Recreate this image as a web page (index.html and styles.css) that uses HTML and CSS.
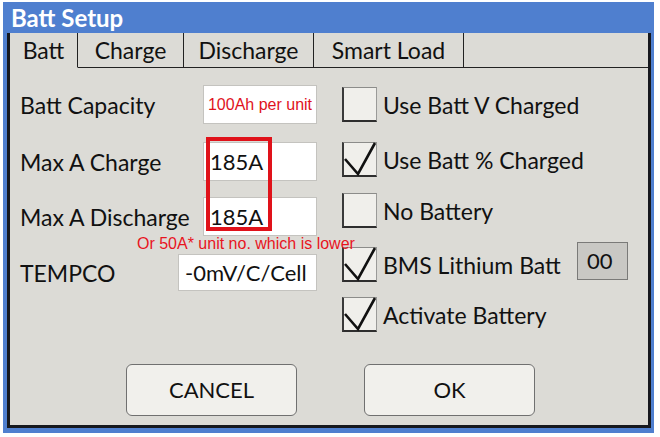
FILE: index.html
```html
<!DOCTYPE html>
<html>
<head>
<meta charset="utf-8">
<link rel="stylesheet" href="styles.css">
</head>
<body>
<div class="window">
  <div class="titlebar">Batt Setup</div>
  <div class="panel">
    <div class="tabs">
      <div class="tab tab-batt active">Batt</div>
      <div class="tab tab-charge">Charge</div>
      <div class="tab tab-discharge">Discharge</div>
      <div class="tab tab-smart">Smart Load</div>
      <div class="tab-fill"></div>
    </div>
    <div class="content">
      <div class="left">
        <div class="row row-cap">
          <span class="label">Batt Capacity</span>
          <div class="field field-note">100Ah per unit</div>
        </div>
        <div class="row row-charge">
          <span class="label">Max A Charge</span>
          <div class="field">185A</div>
        </div>
        <div class="row row-discharge">
          <span class="label">Max A Discharge</span>
          <div class="field">185A</div>
        </div>
        <div class="note">Or 50A* unit no. which is lower</div>
        <div class="row row-tempco">
          <span class="label">TEMPCO</span>
          <div class="field field-wide">-0mV/C/Cell</div>
        </div>
        <div class="highlight"></div>
      </div>
      <div class="right">
        <div class="check-row r1">
          <span class="box"></span>
          <span class="label">Use Batt V Charged</span>
        </div>
        <div class="check-row r2">
          <span class="box"><svg class="tick" viewBox="0 0 35 35"><path d="M3 17 L16 32 L33 1"/></svg></span>
          <span class="label">Use Batt % Charged</span>
        </div>
        <div class="check-row r3">
          <span class="box"></span>
          <span class="label">No Battery</span>
        </div>
        <div class="check-row r4">
          <span class="box"><svg class="tick" viewBox="0 0 35 35"><path d="M3 17 L16 32 L33 1"/></svg></span>
          <span class="label">BMS Lithium Batt</span>
          <span class="num">00</span>
        </div>
        <div class="check-row r5">
          <span class="box"><svg class="tick" viewBox="0 0 35 35"><path d="M3 17 L16 32 L33 1"/></svg></span>
          <span class="label">Activate Battery</span>
        </div>
      </div>
    </div>
    <div class="buttons">
      <div class="btn">CANCEL</div>
      <div class="btn">OK</div>
    </div>
  </div>
</div>
</body>
</html>
```
FILE: styles.css
```css
html, body {
  margin: 0;
  padding: 0;
  background: #ffffff;
}
body {
  font-family: Lato, "Open Sans", sans-serif;
  color: #111111;
}
.window {
  box-sizing: border-box;
  margin: 2px 0 0 3px;
  width: 651px;
  height: 431px;
  background: #4f7fcf;
  display: flex;
  flex-direction: column;
  padding: 0 3px 5px 4px;
}
.titlebar {
  height: 31px;
  line-height: 31px;
  padding-left: 4px;
  color: #ffffff;
  font-weight: bold;
  font-size: 24px;
  flex: none;
}
.panel {
  flex: 1;
  background: #dcdbd6;
  border: 3px solid #16181e;
  border-top: 0;
  display: flex;
  flex-direction: column;
  position: relative;
}
.tabs {
  display: flex;
  height: 35px;
  flex: none;
}
.tab {
  box-sizing: border-box;
  height: 35px;
  line-height: 34px;
  font-size: 23px;
  text-align: center;
  border-right: 1.5px solid #222;
  border-bottom: 1.5px solid #222;
}
.tab.active {
  border-bottom-color: transparent;
}
.tab-batt { width: 68px; }
.tab-charge { width: 106px; }
.tab-discharge { width: 130px; }
.tab-smart { width: 150px; }
.tab-fill {
  flex: 1;
  border-bottom: 1.5px solid #222;
}
.content {
  display: flex;
  padding-left: 10px;
  gap: 25px;
}
.left {
  width: 297px;
  display: flex;
  flex-direction: column;
  position: relative;
}
.row {
  display: flex;
  justify-content: space-between;
  align-items: center;
}
.label {
  font-size: 23px;
  white-space: nowrap;
}
.field {
  box-sizing: border-box;
  width: 114px;
  height: 39px;
  background: #ffffff;
  border: 1px solid #c4c3bf;
  font-size: 22px;
  line-height: 37px;
  padding-left: 6px;
}
.field-note {
  font-family: "Liberation Sans", Arial, sans-serif;
  font-size: 16px;
  color: #e0121c;
  text-align: center;
  padding-left: 0;
}
.field-wide {
  width: 139px;
  height: 37px;
  line-height: 35px;
}
.row-cap { margin-top: 17px; }
.row-charge { margin-top: 18px; }
.row-discharge { margin-top: 16px; }
.note {
  font-family: "Liberation Sans", Arial, sans-serif;
  font-size: 16px;
  line-height: 16px;
  height: 16px;
  color: #e8141e;
  padding-left: 117px;
  white-space: nowrap;
  position: relative;
  z-index: 2;
}
.row-tempco { margin-top: 2px; }
.highlight {
  position: absolute;
  left: 186px;
  top: 69px;
  width: 66px;
  height: 94px;
  box-sizing: border-box;
  border: 4px solid #e0121a;
}
.right {
  width: 286px;
  display: flex;
  flex-direction: column;
}
.check-row {
  display: flex;
  align-items: center;
  height: 35px;
}
.r1 { margin-top: 19px; }
.r2 { margin-top: 20px; }
.r3 { margin-top: 16px; }
.r4 { margin-top: 19px; }
.r5 { margin-top: 15px; }
.box {
  box-sizing: border-box;
  width: 35px;
  height: 35px;
  flex: none;
  background: #f0efeb;
  border-top: 1px solid #8c8c8a;
  border-right: 1px solid #9a9a98;
  border-bottom: 2px solid #2e2e2e;
  border-left: 2px solid #3a3a3a;
  margin-right: 6px;
  position: relative;
}
.tick {
  position: absolute;
  left: -2px;
  top: -1px;
  width: 35px;
  height: 35px;
  overflow: visible;
}
.tick path {
  fill: none;
  stroke: #111;
  stroke-width: 2.6;
  stroke-linejoin: miter;
}
.num {
  box-sizing: border-box;
  margin-left: auto;
  width: 51px;
  height: 38px;
  margin-top: -7px;
  background: #c9c8c4;
  border: 1px solid #7a7a78;
  font-size: 22px;
  line-height: 36px;
  padding-left: 9px;
}
.buttons {
  margin-top: auto;
  display: flex;
  justify-content: center;
  gap: 67px;
  padding: 0 0 9px 3px;
}
.btn {
  box-sizing: border-box;
  width: 171px;
  height: 52px;
  background: #f1f0ec;
  border: 1.5px solid #707070;
  border-radius: 6px;
  font-size: 22px;
  line-height: 49px;
  text-align: center;
}
```
